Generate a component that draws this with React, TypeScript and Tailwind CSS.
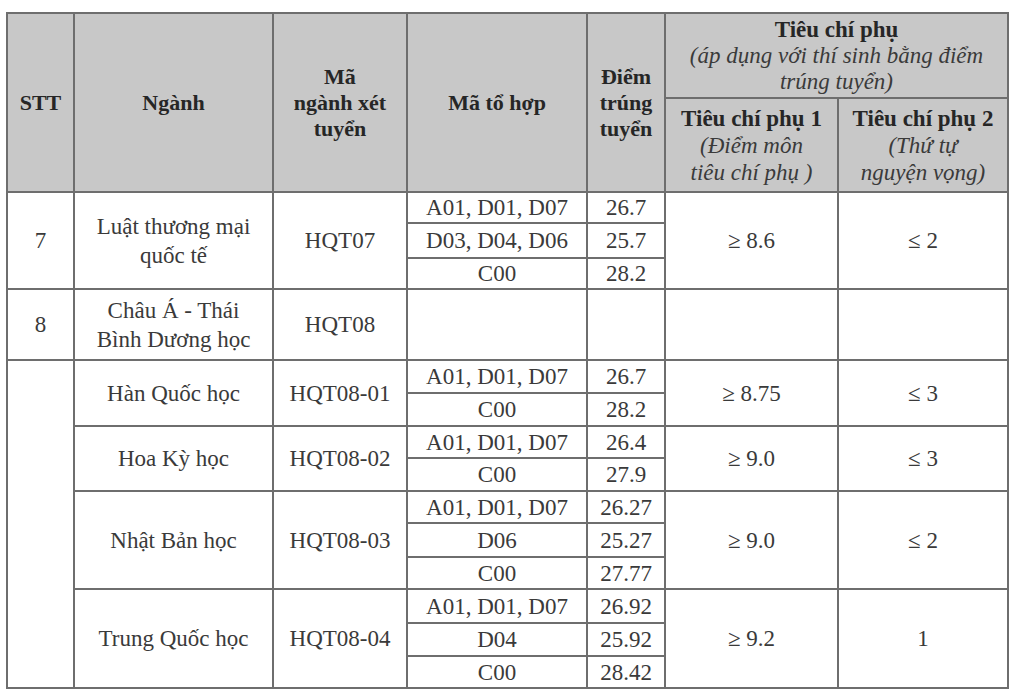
import React from 'react'

type Sub = { combo: string; score: string }
type Row = {
  stt?: string
  name: React.ReactNode
  code: string
  subs: Sub[]
  heights: number[]
  c1?: string
  c2?: string
}

const rows: Row[] = [
  {
    stt: '7',
    name: (
      <>
        Luật thương mại
        <br />
        quốc tế
      </>
    ),
    code: 'HQT07',
    subs: [
      { combo: 'A01, D01, D07', score: '26.7' },
      { combo: 'D03, D04, D06', score: '25.7' },
      { combo: 'C00', score: '28.2' },
    ],
    heights: [31, 35, 31],
    c1: '≥ 8.6',
    c2: '≤ 2',
  },
  {
    stt: '8',
    name: (
      <>
        Châu Á - Thái
        <br />
        Bình Dương học
      </>
    ),
    code: 'HQT08',
    subs: [{ combo: '', score: '' }],
    heights: [71],
    c1: '',
    c2: '',
  },
  {
    name: 'Hàn Quốc học',
    code: 'HQT08-01',
    subs: [
      { combo: 'A01, D01, D07', score: '26.7' },
      { combo: 'C00', score: '28.2' },
    ],
    heights: [33, 33],
    c1: '≥ 8.75',
    c2: '≤ 3',
  },
  {
    name: 'Hoa Kỳ học',
    code: 'HQT08-02',
    subs: [
      { combo: 'A01, D01, D07', score: '26.4' },
      { combo: 'C00', score: '27.9' },
    ],
    heights: [32, 33],
    c1: '≥ 9.0',
    c2: '≤ 3',
  },
  {
    name: 'Nhật Bản học',
    code: 'HQT08-03',
    subs: [
      { combo: 'A01, D01, D07', score: '26.27' },
      { combo: 'D06', score: '25.27' },
      { combo: 'C00', score: '27.77' },
    ],
    heights: [32, 34, 32],
    c1: '≥ 9.0',
    c2: '≤ 2',
  },
  {
    name: 'Trung Quốc học',
    code: 'HQT08-04',
    subs: [
      { combo: 'A01, D01, D07', score: '26.92' },
      { combo: 'D04', score: '25.92' },
      { combo: 'C00', score: '28.42' },
    ],
    heights: [34, 33, 32],
    c1: '≥ 9.2',
    c2: '1',
  },
]

const cell = 'border-2 border-[#6e6e6e] text-center align-middle p-0'

export default function App() {
  let merged = false
  return (
    <div className="min-h-screen bg-white pl-[6px] pt-[12px] font-['Liberation_Serif',serif] text-[23px] text-[#3a3a3a]">
      <table className="table-fixed border-collapse w-[1001px]">
        <colgroup>
          <col className="w-[67px]" />
          <col className="w-[199px]" />
          <col className="w-[134px]" />
          <col className="w-[180px]" />
          <col className="w-[78px]" />
          <col className="w-[173px]" />
          <col className="w-[170px]" />
        </colgroup>
        <thead className="bg-[#c8c8c8] text-[#262626] font-bold text-[22px] leading-[26px]">
          <tr className="h-[85px]">
            <th rowSpan={2} className={cell}>STT</th>
            <th rowSpan={2} className={cell}>Ngành</th>
            <th rowSpan={2} className={cell}>
              Mã
              <br />
              ngành xét
              <br />
              tuyển
            </th>
            <th rowSpan={2} className={cell}>Mã tổ hợp</th>
            <th rowSpan={2} className={cell}>
              Điểm
              <br />
              trúng
              <br />
              tuyển
            </th>
            <th colSpan={2} className={cell + ' text-[23px]'}>
              Tiêu chí phụ
              <br />
              <span className="font-normal italic text-[#3a3a3a]">
                (áp dụng với thí sinh bằng điểm
                <br />
                trúng tuyển)
              </span>
            </th>
          </tr>
          <tr className="h-[94px]">
            <th className={cell + ' leading-[27px] text-[23px]'}>
              Tiêu chí phụ 1
              <br />
              <span className="font-normal italic text-[#3a3a3a]">
                (Điểm môn
                <br />
                tiêu chí phụ )
              </span>
            </th>
            <th className={cell + ' leading-[27px] text-[23px]'}>
              Tiêu chí phụ 2
              <br />
              <span className="font-normal italic text-[#3a3a3a]">
                (Thứ tự
                <br />
                nguyện vọng)
              </span>
            </th>
          </tr>
        </thead>
        <tbody className="leading-[29px]">
          {rows.map((r, i) =>
            r.subs.map((s, j) => {
              const first = j === 0
              const n = r.subs.length
              let sttCell: React.ReactNode = null
              if (first) {
                if (r.stt) {
                  sttCell = (
                    <td rowSpan={n} className={cell}>
                      {r.stt}
                    </td>
                  )
                } else if (!merged) {
                  merged = true
                  sttCell = <td rowSpan={10} className={cell} />
                }
              }
              return (
                <tr key={i + '-' + j} style={{ height: r.heights[j] }}>
                  {sttCell}
                  {first && (
                    <td rowSpan={n} className={cell}>
                      {r.name}
                    </td>
                  )}
                  {first && (
                    <td rowSpan={n} className={cell}>
                      {r.code}
                    </td>
                  )}
                  <td className={cell + ' leading-none'}>{s.combo}</td>
                  <td className={cell + ' leading-none'}>{s.score}</td>
                  {first && (
                    <td rowSpan={n} className={cell}>
                      {r.c1}
                    </td>
                  )}
                  {first && (
                    <td rowSpan={n} className={cell}>
                      {r.c2}
                    </td>
                  )}
                </tr>
              )
            })
          )}
        </tbody>
      </table>
    </div>
  )
}
